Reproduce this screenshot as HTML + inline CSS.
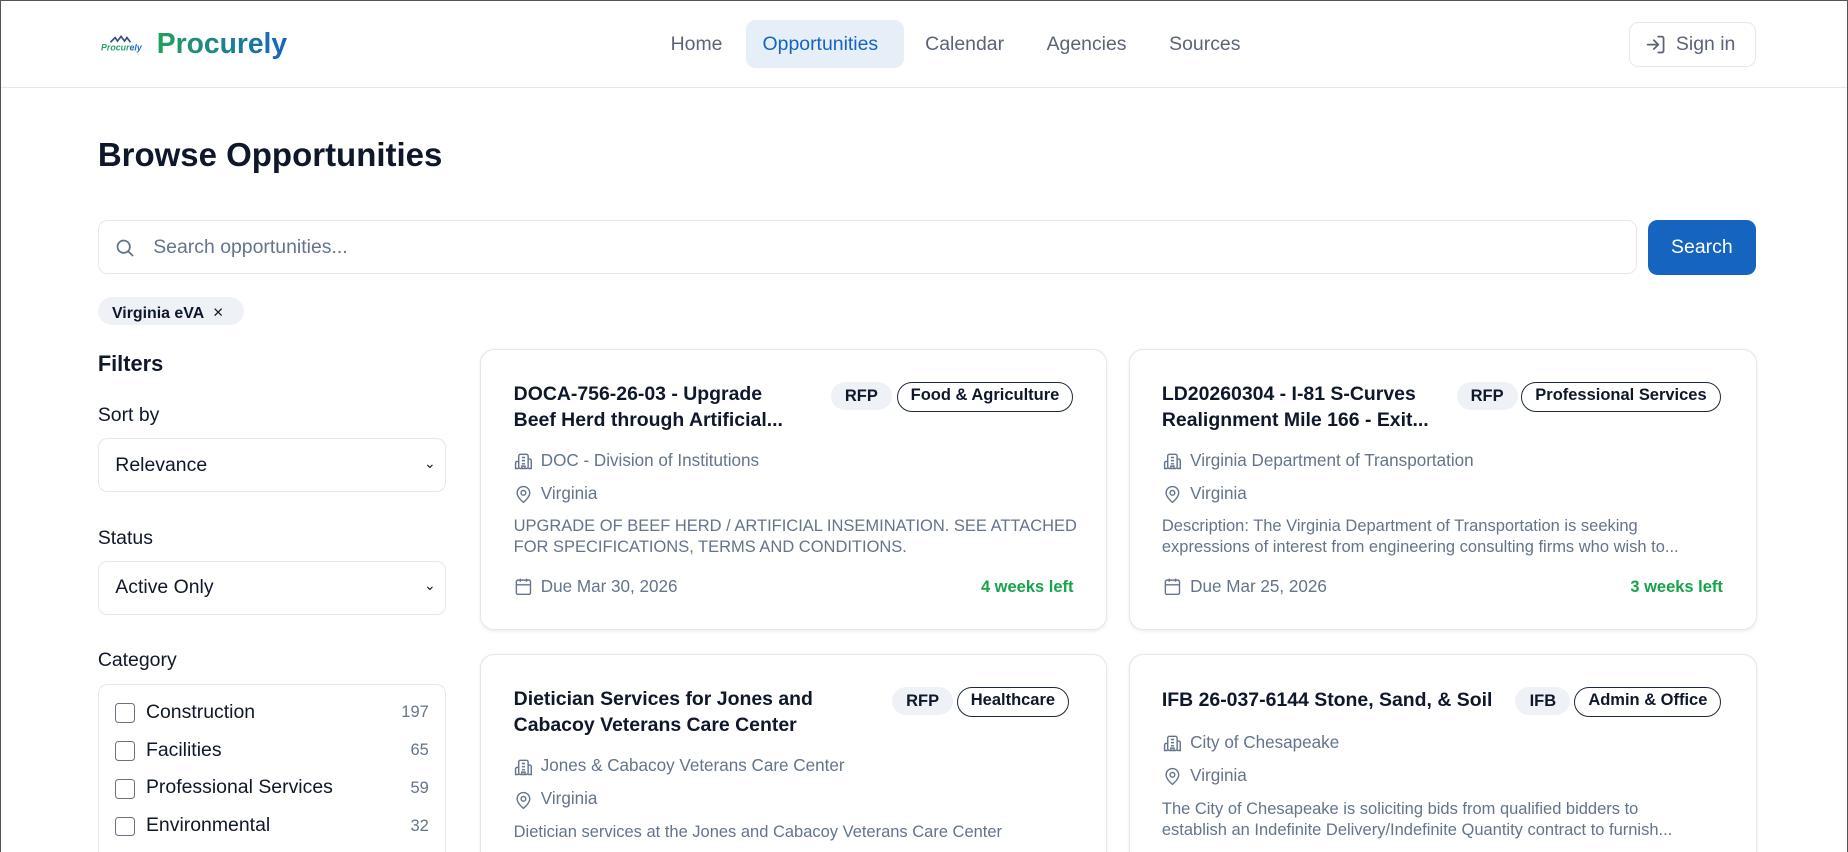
<!DOCTYPE html>
<html><head><meta charset="utf-8"><style>
html,body{margin:0;padding:0;overflow:hidden;height:852px}
#w{zoom:1.178571;width:1568px;height:723px;overflow:hidden;font-family:"Liberation Sans",sans-serif;background:#fff;position:relative;color:#0f172a}
.frame{position:absolute;left:0;top:0;width:1566px;height:730px;border:1px solid #555;pointer-events:none;z-index:5}
.a{position:absolute;white-space:nowrap}
.nav{font-size:16.5px;color:#5b6477;top:28px}
.card{position:absolute;width:531px;border:1px solid #e2e8f0;border-radius:12px;box-shadow:0 1px 3px rgba(0,0,0,.08);background:#fff}
.t{font-size:16.5px;font-weight:bold;color:#0f172a;line-height:22px}
.pill{position:absolute;height:24px;line-height:24px;border-radius:13px;font-size:14px;font-weight:bold;padding:0 12px;color:#0f172a}
.rfp{background:#eef2f7}
.out{border:1px solid #1e293b;line-height:22px;padding:0 11px}
.m{font-size:14.5px;color:#64748b}
.d{font-size:14px;color:#64748b;line-height:18px}
.g{font-size:14px;color:#16a34a;font-weight:bold}
.sel{position:absolute;left:83px;width:294px;height:44px;border:1px solid #e2e8f0;border-radius:8px}
.sel span{position:absolute;left:14px;top:12px;font-size:16.5px;color:#0f172a}
.sel i{position:absolute;right:8px;top:13px;font-style:normal;font-size:12px}
.cb{position:absolute;left:14px;width:15px;height:15px;border:1.3px solid #6b7280;border-radius:3px}
.cl{position:absolute;left:40px;font-size:16.5px;color:#0f172a}
.cn{position:absolute;right:14px;font-size:14px;color:#64748b}
svg{position:absolute}
</style></head><body><div id="w">
<div class="frame"></div>
<div class="a" style="left:86px;top:29px;width:36px;height:16px">
<svg width="36" height="18" viewBox="0 0 36 18"><path d="M8 7 L12 3 L14 6 L17 2 L20 6 L22 3 L25 7" stroke="#334e80" stroke-width="1.4" fill="none"/><text x="0" y="14" font-size="7.5" font-style="italic" font-weight="bold" fill="#2e9e6a" font-family="Liberation Sans">Procur<tspan fill="#1a6cc4">ely</tspan></text></svg></div>
<div class="a" style="left:133px;top:23px;font-size:24px;font-weight:bold;background:linear-gradient(90deg,#23a05a,#1565c0);-webkit-background-clip:text;color:transparent">Procurely</div>
<div class="a nav" style="left:569px">Home</div>
<div class="a" style="left:633px;top:17px;width:134px;height:41px;background:#e6eef8;border-radius:8px"></div>
<div class="a nav" style="left:647px;color:#1565c0">Opportunities</div>
<div class="a nav" style="left:785px">Calendar</div>
<div class="a nav" style="left:888px">Agencies</div>
<div class="a nav" style="left:992px">Sources</div>
<div class="a" style="left:1382px;top:19px;width:106px;height:36px;border:1px solid #e2e8f0;border-radius:8px"></div>
<svg style="left:1396px;top:29px" width="18" height="18" viewBox="0 0 24 24" fill="none" stroke="#5b6477" stroke-width="2" stroke-linecap="round" stroke-linejoin="round"><path d="M15 3h4a2 2 0 0 1 2 2v14a2 2 0 0 1-2 2h-4"/><path d="M10 17l5-5-5-5"/><path d="M15 12H3"/></svg>
<div class="a nav" style="left:1422px">Sign in</div>
<div class="a" style="left:0;top:74px;width:1568px;height:1px;background:#e2e8f0"></div>
<div class="a" style="left:83px;top:115px;font-size:28px;font-weight:bold">Browse Opportunities</div>
<div class="a" style="left:83px;top:187px;width:1304px;height:44px;border:1px solid #e2e8f0;border-radius:8px"></div>
<svg style="left:97px;top:201px" width="18" height="18" viewBox="0 0 24 24" fill="none" stroke="#64748b" stroke-width="2" stroke-linecap="round"><circle cx="11" cy="11" r="7"/><path d="M21 21l-4.5-4.5"/></svg>
<div class="a" style="left:130px;top:200px;font-size:16.5px;color:#64748b">Search opportunities...</div>
<div class="a" style="left:1398px;top:187px;width:92px;height:46px;background:#1565c0;border-radius:8px;color:#fff;font-size:16.5px;text-align:center;line-height:46px">Search</div>
<div class="a" style="left:83px;top:252px;width:124px;height:24px;background:#eef2f7;border-radius:12px"></div>
<div class="a" style="left:95px;top:256px;font-size:13.5px;font-weight:bold">Virginia eVA&nbsp; <span style="font-weight:normal;font-size:15px">×</span></div>
<div class="a" style="left:83px;top:298px;font-size:18.5px;font-weight:bold">Filters</div>
<div class="a" style="left:83px;top:343px;font-size:16.5px">Sort by</div>
<div class="sel" style="top:372px"><span>Relevance</span><i>⌄</i></div>
<div class="a" style="left:83px;top:447px;font-size:16.5px">Status</div>
<div class="sel" style="top:476px"><span>Active Only</span><i>⌄</i></div>
<div class="a" style="left:83px;top:551px;font-size:16.5px">Category</div>
<div class="a" style="left:83px;top:580px;width:294px;height:160px;border:1px solid #e2e8f0;border-radius:8px">
<div class="cb" style="top:16px"></div><div class="cl" style="top:14px">Construction</div><div class="cn" style="top:16px">197</div>
<div class="cb" style="top:48px"></div><div class="cl" style="top:46px">Facilities</div><div class="cn" style="top:48px">65</div>
<div class="cb" style="top:80px"></div><div class="cl" style="top:78px">Professional Services</div><div class="cn" style="top:80px">59</div>
<div class="cb" style="top:112px"></div><div class="cl" style="top:110px">Environmental</div><div class="cn" style="top:112px">32</div>
</div>
<div class="card" style="left:407px;top:296px;height:237px">
<div class="a t" style="left:28px;top:27px;white-space:normal;width:250px">DOCA-756-26-03 - Upgrade Beef Herd through Artificial...</div>
<div class="pill rfp" style="left:297px;top:27px">RFP</div>
<div class="pill out" style="left:353px;top:27px">Food &amp; Agriculture</div>
<svg style="left:28px;top:87px" width="16" height="16" viewBox="0 0 24 24" fill="none" stroke="#64748b" stroke-width="1.8"><rect x="6" y="3" width="12" height="18" rx="2"/><path d="M6 12H4a2 2 0 0 0-2 2v7h4M18 9h2a2 2 0 0 1 2 2v10h-4M10 7h4M10 11h4M10 15h4M10 21v-3h4v3"/></svg>
<div class="a m" style="left:51px;top:86px">DOC - Division of Institutions</div>
<svg style="left:28px;top:115px" width="16" height="16" viewBox="0 0 24 24" fill="none" stroke="#64748b" stroke-width="1.8"><path d="M20 10c0 6-8 12-8 12s-8-6-8-12a8 8 0 0 1 16 0z"/><circle cx="12" cy="10" r="3"/></svg>
<div class="a m" style="left:51px;top:114px">Virginia</div>
<div class="a d" style="left:28px;top:141px;white-space:normal;width:480px">UPGRADE OF BEEF HERD / ARTIFICIAL INSEMINATION. SEE ATTACHED FOR SPECIFICATIONS, TERMS AND CONDITIONS.</div>
<svg style="left:28px;top:193px" width="16" height="16" viewBox="0 0 24 24" fill="none" stroke="#64748b" stroke-width="1.8"><rect x="3" y="4" width="18" height="18" rx="2"/><path d="M16 2v4M8 2v4M3 10h18"/></svg>
<div class="a m" style="left:51px;top:193px">Due Mar 30, 2026</div>
<div class="a g" style="right:28px;top:194px">4 weeks left</div>
</div>
<div class="card" style="left:958px;top:296px;height:237px">
<div class="a t" style="left:27px;top:27px;white-space:normal;width:250px">LD20260304 - I-81 S-Curves Realignment Mile 166 - Exit...</div>
<div class="pill rfp" style="left:277px;top:27px">RFP</div>
<div class="pill out" style="left:332px;top:27px">Professional Services</div>
<svg style="left:28px;top:87px" width="16" height="16" viewBox="0 0 24 24" fill="none" stroke="#64748b" stroke-width="1.8"><rect x="6" y="3" width="12" height="18" rx="2"/><path d="M6 12H4a2 2 0 0 0-2 2v7h4M18 9h2a2 2 0 0 1 2 2v10h-4M10 7h4M10 11h4M10 15h4M10 21v-3h4v3"/></svg>
<div class="a m" style="left:51px;top:86px">Virginia Department of Transportation</div>
<svg style="left:28px;top:115px" width="16" height="16" viewBox="0 0 24 24" fill="none" stroke="#64748b" stroke-width="1.8"><path d="M20 10c0 6-8 12-8 12s-8-6-8-12a8 8 0 0 1 16 0z"/><circle cx="12" cy="10" r="3"/></svg>
<div class="a m" style="left:51px;top:114px">Virginia</div>
<div class="a d" style="left:27px;top:141px;white-space:normal;width:480px">Description: The Virginia Department of Transportation is seeking expressions of interest from engineering consulting firms who wish to...</div>
<svg style="left:28px;top:193px" width="16" height="16" viewBox="0 0 24 24" fill="none" stroke="#64748b" stroke-width="1.8"><rect x="3" y="4" width="18" height="18" rx="2"/><path d="M16 2v4M8 2v4M3 10h18"/></svg>
<div class="a m" style="left:51px;top:193px">Due Mar 25, 2026</div>
<div class="a g" style="right:28px;top:194px">3 weeks left</div>
</div>
<div class="card" style="left:407px;top:555px;height:237px">
<div class="a t" style="left:28px;top:27px;white-space:normal;width:300px">Dietician Services for Jones and Cabacoy Veterans Care Center</div>
<div class="pill rfp" style="left:349px;top:27px">RFP</div>
<div class="pill out" style="left:404px;top:27px">Healthcare</div>
<svg style="left:28px;top:87px" width="16" height="16" viewBox="0 0 24 24" fill="none" stroke="#64748b" stroke-width="1.8"><rect x="6" y="3" width="12" height="18" rx="2"/><path d="M6 12H4a2 2 0 0 0-2 2v7h4M18 9h2a2 2 0 0 1 2 2v10h-4M10 7h4M10 11h4M10 15h4M10 21v-3h4v3"/></svg>
<div class="a m" style="left:51px;top:86px">Jones &amp; Cabacoy Veterans Care Center</div>
<svg style="left:28px;top:115px" width="16" height="16" viewBox="0 0 24 24" fill="none" stroke="#64748b" stroke-width="1.8"><path d="M20 10c0 6-8 12-8 12s-8-6-8-12a8 8 0 0 1 16 0z"/><circle cx="12" cy="10" r="3"/></svg>
<div class="a m" style="left:51px;top:114px">Virginia</div>
<div class="a d" style="left:28px;top:142px">Dietician services at the Jones and Cabacoy Veterans Care Center</div>
</div>
<div class="card" style="left:958px;top:555px;height:237px">
<div class="a t" style="left:27px;top:28px">IFB 26-037-6144 Stone, Sand, &amp; Soil</div>
<div class="pill rfp" style="left:327px;top:27px">IFB</div>
<div class="pill out" style="left:377px;top:27px">Admin &amp; Office</div>
<svg style="left:28px;top:67px" width="16" height="16" viewBox="0 0 24 24" fill="none" stroke="#64748b" stroke-width="1.8"><rect x="6" y="3" width="12" height="18" rx="2"/><path d="M6 12H4a2 2 0 0 0-2 2v7h4M18 9h2a2 2 0 0 1 2 2v10h-4M10 7h4M10 11h4M10 15h4M10 21v-3h4v3"/></svg>
<div class="a m" style="left:51px;top:66px">City of Chesapeake</div>
<svg style="left:28px;top:95px" width="16" height="16" viewBox="0 0 24 24" fill="none" stroke="#64748b" stroke-width="1.8"><path d="M20 10c0 6-8 12-8 12s-8-6-8-12a8 8 0 0 1 16 0z"/><circle cx="12" cy="10" r="3"/></svg>
<div class="a m" style="left:51px;top:94px">Virginia</div>
<div class="a d" style="left:27px;top:122px;white-space:normal;width:462px">The City of Chesapeake is soliciting bids from qualified bidders to establish an Indefinite Delivery/Indefinite Quantity contract to furnish...</div>
</div>
</div></body></html>
